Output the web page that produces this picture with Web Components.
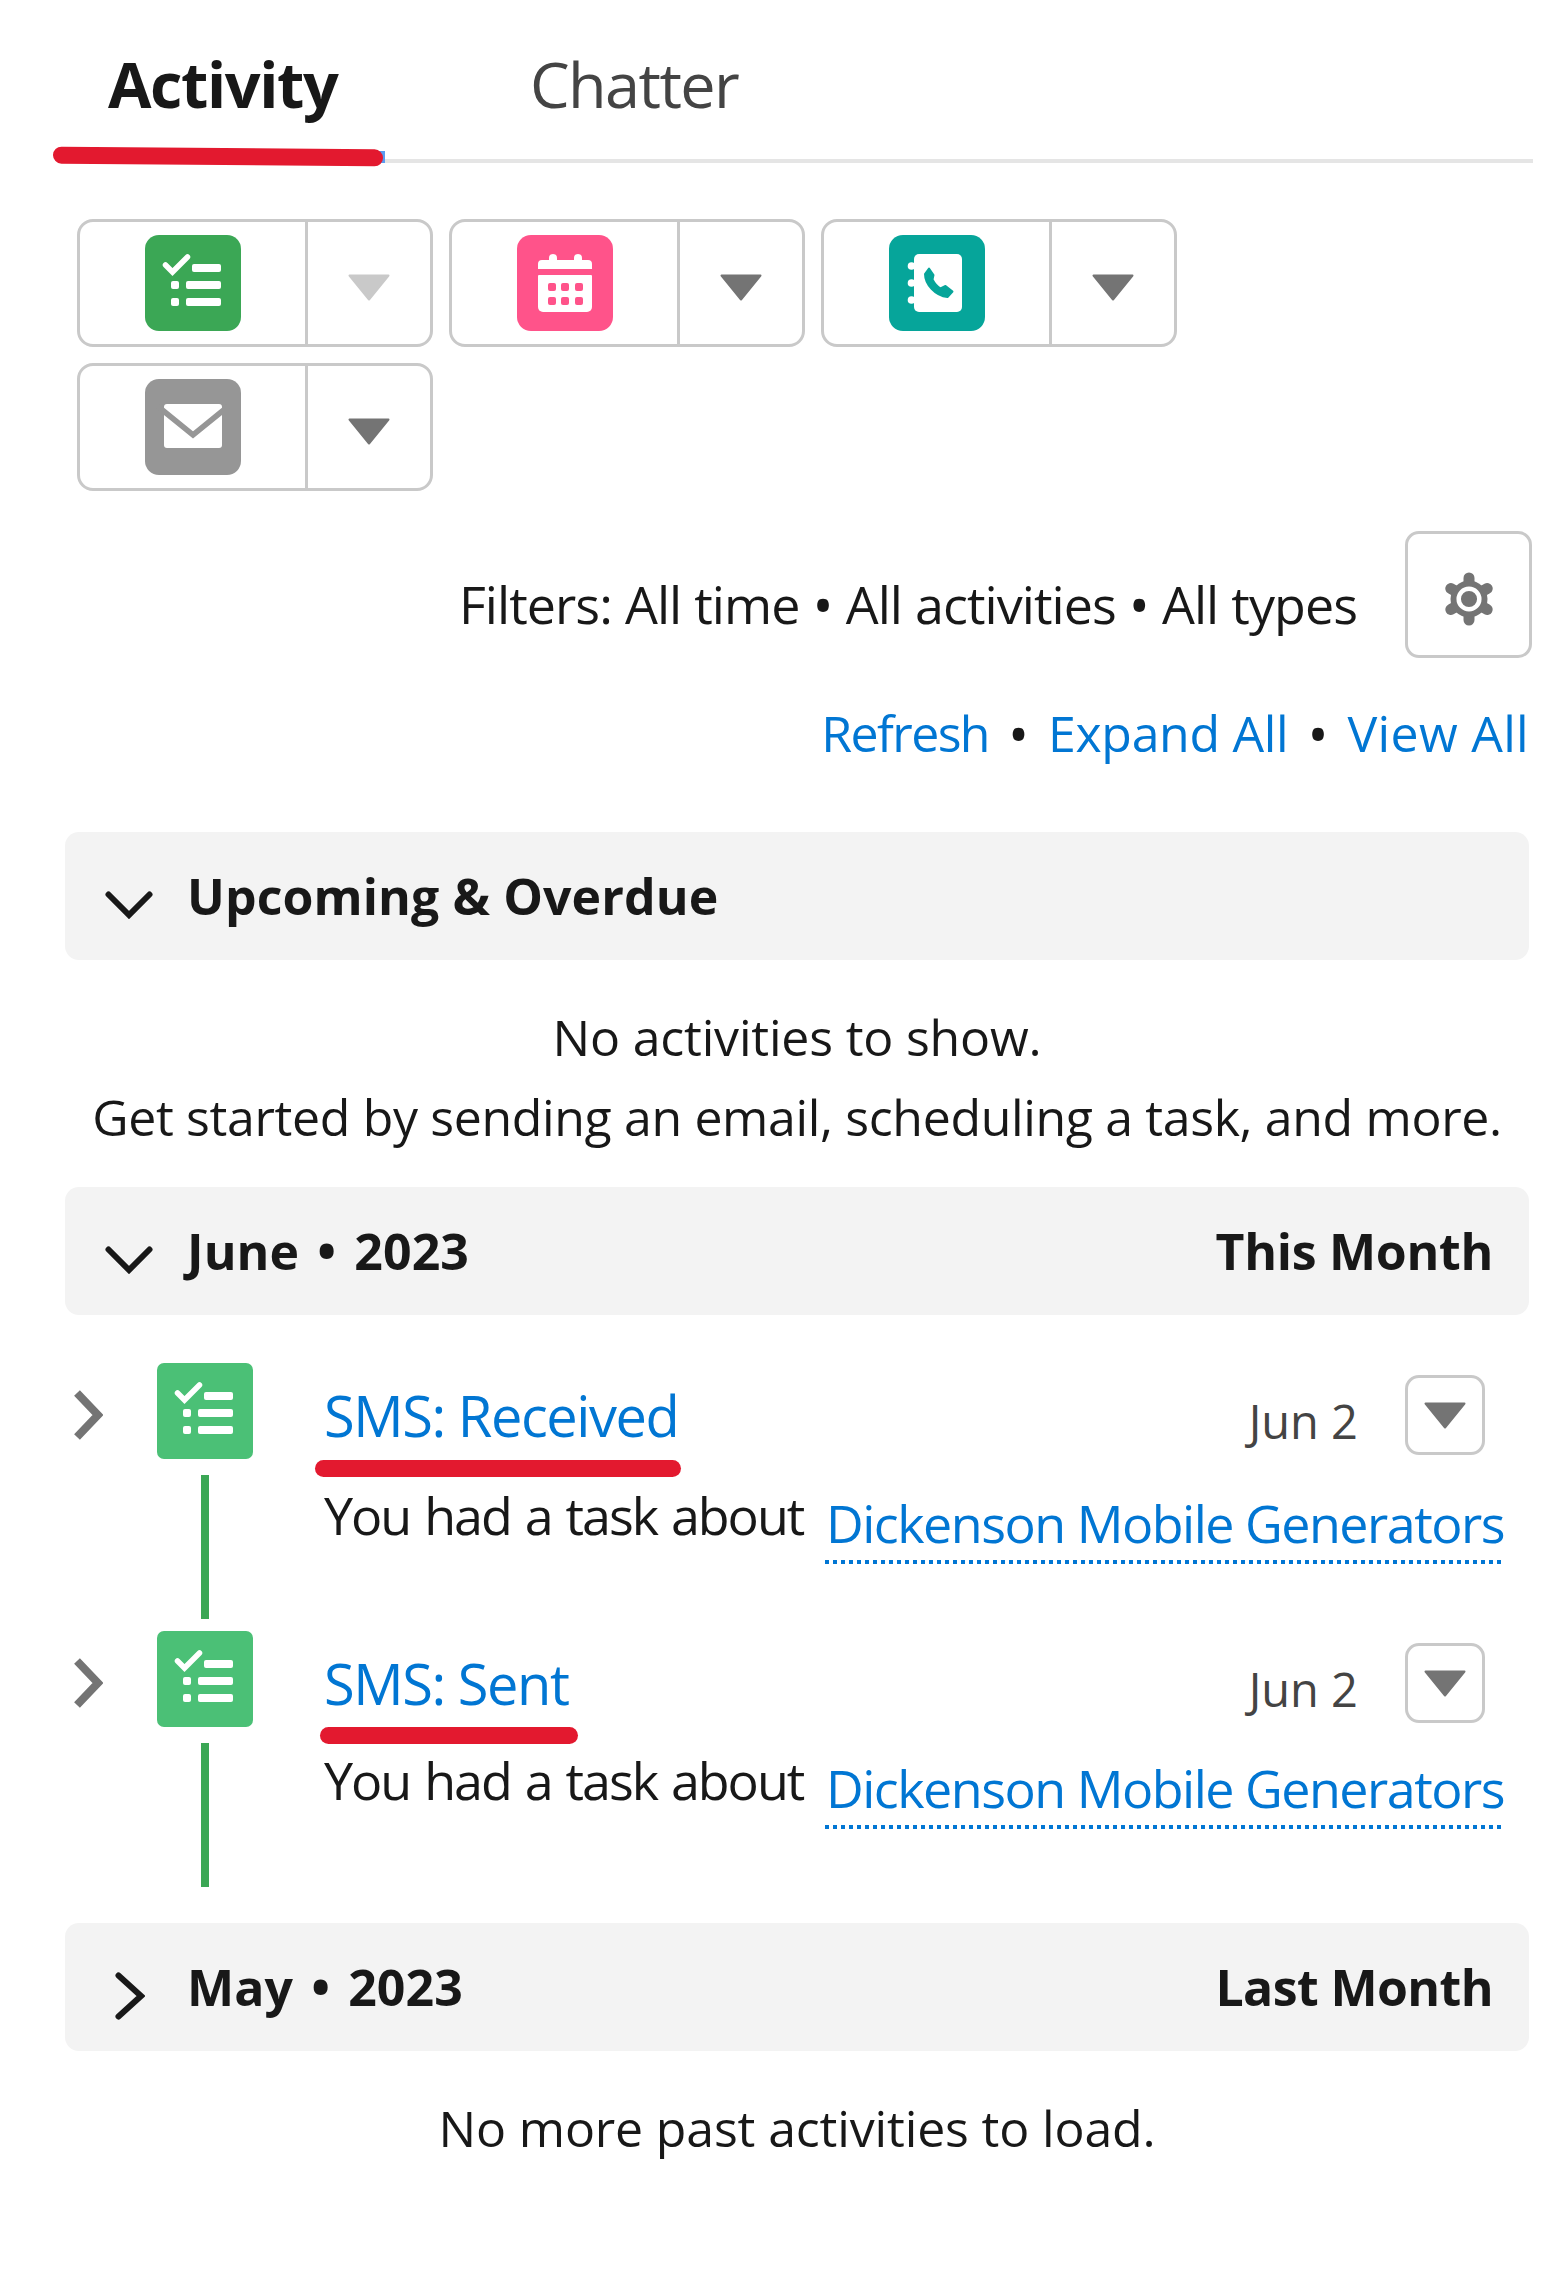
<!DOCTYPE html>
<html>
<head>
<meta charset="utf-8">
<style>
    html, body { margin: 0; background: #fff; }
    body { font-family: "Open Sans", "Noto Sans", sans-serif; color: #181818; }
</style>
</head>
<body>
<activity-panel></activity-panel>

<script>
const TASK = `<rect width="96" height="96" rx="RX" fill="BG"/>
    <path d="M20.500 30l7 7 15-15" fill="none" stroke="#fff" stroke-width="5.500" stroke-linecap="round"/>
    <rect x="47" y="29" width="29" height="8" rx="2" fill="#fff"/>
    <rect x="41" y="46" width="35" height="8" rx="2" fill="#fff"/>
    <rect x="41" y="63" width="35" height="8" rx="2" fill="#fff"/>
    <rect x="26" y="46" width="8" height="8" rx="2" fill="#fff"/>
    <rect x="26" y="63" width="8" height="8" rx="2" fill="#fff"/>`;

const ICONS = {
    task: `<svg viewBox="0 0 96 96" width="96" height="96">${TASK.replace('RX', '14').replace('BG', '#3ba755')}</svg>`,
    taskLight: `<svg viewBox="0 0 96 96" width="96" height="96">${TASK.replace('RX', '7').replace('BG', '#4bc076')}</svg>`,
    event: `<svg viewBox="0 0 96 96" width="96" height="96"><rect width="96" height="96" rx="14" fill="#ff538a"/>
        <path d="M32 25v-2a4 4 0 0 1 8 0v2h17v-2a4 4 0 0 1 8 0v2h6a4 4 0 0 1 4 4v5H21v-5a4 4 0 0 1 4-4z" fill="#fff"/>
        <path d="M22 40h52a1 1 0 0 1 1 1v31a5 5 0 0 1-5 5H26a5 5 0 0 1-5-5V41a1 1 0 0 1 1-1z" fill="#fff"/>
        <g fill="#ff538a"><rect x="31" y="48" width="8" height="8" rx="2"/><rect x="44" y="48" width="8" height="8" rx="2"/><rect x="58" y="48" width="8" height="8" rx="2"/>
        <rect x="31" y="62" width="8" height="8" rx="2"/><rect x="44" y="62" width="8" height="8" rx="2"/><rect x="58" y="62" width="8" height="8" rx="2"/></g></svg>`,
    call: `<svg viewBox="0 0 96 96" width="96" height="96"><rect width="96" height="96" rx="14" fill="#06a59a"/>
        <rect x="25" y="19" width="48" height="58" rx="5" fill="#fff"/>
        <g fill="#fff"><circle cx="22.500" cy="31" r="3.800"/><circle cx="22.500" cy="48" r="3.800"/><circle cx="22.500" cy="65" r="3.800"/></g>
        <path d="M40 33.500l4.500 6.500-1 4.500q3 6 8 9l5-2.500 7 5.500-5 5.500C46 61 36 49 36 39z" fill="#06a59a" stroke="#06a59a" stroke-width="2" stroke-linejoin="round"/></svg>`,
    email: `<svg viewBox="0 0 96 96" width="96" height="96"><rect width="96" height="96" rx="14" fill="#969696"/>
        <rect x="19" y="25" width="58" height="44" rx="3" fill="#fff"/>
        <path d="M13 27.500L48 56l35-28.500" fill="none" stroke="#969696" stroke-width="5.500"/></svg>`
};

const TRIANGLE = (color) => `<svg viewBox="0 0 42 27" width="42" height="27"><path d="M1.500 1.500h39L21 25.500z" fill="${color}" stroke="${color}" stroke-width="2" stroke-linejoin="round"/></svg>`;

class RedMark extends HTMLElement {
    constructor() {
        super();
        this.attachShadow({mode: "open"}).innerHTML = `
        <style>
            :host {
                display: block;
                position: absolute;
                background: #e3192f;
                border-radius: 9px;
                height: 17px;
            }
        </style>`;
    }
}

class TabBar extends HTMLElement {
    constructor() {
        super();
        this.attachShadow({mode: "open"}).innerHTML = `
        <style>
            :host {
                display: flex;
                position: relative;
                height: 163px;
                box-sizing: border-box;
                border-bottom: 4px solid #e5e5e5;
                margin-right: -4px;
            }
            .tab {
                font-size: 63px;
                line-height: 86px;
                padding-top: 41px;
                letter-spacing: -1.400px;
            }
            .on {
                width: 277px;
                padding-left: 43px;
                font-weight: 700;
            }
            .off { margin-left: 145px; color: #444; letter-spacing: -1.600px; }
            .blue {
                position: absolute;
                left: 314px;
                top: 151px;
                width: 6px;
                height: 12px;
                background: #5a9bf0;
            }
            red-mark {
                left: -12px;
                top: 148px;
                width: 330px;
                transform: rotate(0.5deg);
            }
        </style>
        <div class="tab on">Activity</div>
        <div class="tab off">Chatter</div>
        <div class="blue"></div>
        <red-mark></red-mark>`;
    }
}

class SplitButton extends HTMLElement {
    constructor() {
        super();
        const disabled = this.hasAttribute('disabled');
        this.attachShadow({mode: "open"}).innerHTML = `
        <style>
            :host {
                display: flex;
                width: 356px;
                height: 128px;
                box-sizing: border-box;
                border: 3px solid #c9c9c9;
                border-radius: 16px;
            }
            .main {
                width: 225px;
                display: flex;
                align-items: center;
                justify-content: center;
                border-right: 3px solid #c9c9c9;
            }
            .more {
                flex: 1;
                display: flex;
                align-items: center;
                justify-content: center;
                padding-top: 8px;
                box-sizing: border-box;
            }
            svg { display: block; }
        </style>
        <div class="main">${ICONS[this.getAttribute('icon')]}</div>
        <div class="more">${TRIANGLE(disabled ? '#c9c9c9' : '#747474')}</div>`;
    }
}

class FilterBar extends HTMLElement {
    constructor() {
        super();
        this.attachShadow({mode: "open"}).innerHTML = `
        <style>
            :host {
                display: block;
                margin-top: 40px;
                margin-right: -3px;
            }
            .filters {
                display: flex;
                justify-content: flex-end;
                gap: 48px;
            }
            .label { font-size: 52px; line-height: 70px; padding-top: 38px; letter-spacing: -0.950px; word-spacing: 0.500px; white-space: nowrap; }
            .label span { font-size: 56px; line-height: 1px; position: relative; top: 2px; }
            .gear {
                width: 127px;
                height: 127px;
                box-sizing: border-box;
                border: 3px solid #c9c9c9;
                border-radius: 14px;
                display: flex;
                align-items: center;
                justify-content: center;
            }
            .gear svg { margin-top: 8px; }
            .links {
                display: flex;
                justify-content: flex-end;
                align-items: center;
                font-size: 50px;
                line-height: 70px;
                color: #0176d3;
                padding-right: 3px;
                margin-top: 40px;
                margin-bottom: 64px;
                gap: 19px;
            }
            .dot { color: #181818; font-size: 56px; }
            .a { letter-spacing: -1.600px; }
            .b { letter-spacing: -0.300px; }
            .c { letter-spacing: 0.300px; }
        </style>
        <div class="filters">
            <div class="label">Filters: All time <span>•</span> All activities <span>•</span> All types</div>
            <div class="gear">
                <svg viewBox="0 0 60 60" width="60" height="60">
                    <g stroke="#747474" stroke-width="11" stroke-linecap="round">
                        <path d="M30 9v42M11.800 19.500l36.400 21M11.800 40.500l36.400-21"/>
                    </g>
                    <circle cx="30" cy="30" r="18.500" fill="#747474"/>
                    <circle cx="30" cy="30" r="10.300" fill="#747474" stroke="#fff" stroke-width="4.500"/>
                </svg>
            </div>
        </div>
        <div class="links">
            <span class="a">Refresh</span><span class="dot">•</span><span class="b">Expand All</span><span class="dot">•</span><span class="c">View All</span>
        </div>`;
    }
}

class SectionHeader extends HTMLElement {
    constructor() {
        super();
        const open = this.hasAttribute('open');
        const chevron = open
            ? `<svg viewBox="0 0 48 28" width="48" height="28" class="open"><path d="M3.500 3.500L24 24 44.500 3.500" fill="none" stroke="#181818" stroke-width="6" stroke-linecap="round"/></svg>`
            : `<svg viewBox="0 0 30 48" width="30" height="48" class="closed"><path d="M3.500 3.500L26 24 3.500 44.500" fill="none" stroke="#181818" stroke-width="6" stroke-linecap="round"/></svg>`;
        this.attachShadow({mode: "open"}).innerHTML = `
        <style>
            :host {
                display: flex;
                align-items: center;
                height: 128px;
                background: #f3f3f3;
                border-radius: 14px;
                font-size: 50px;
                font-weight: 700;
                padding-right: 36px;
            }
            svg { display: block; flex: none; }
            .open { margin: 17px 34px 0 40px; }
            .closed { margin: 17px 42px 0 50px; }
            .title { flex: 1; letter-spacing: 0.100px; }
        </style>
        ${chevron}
        <div class="title"><slot></slot></div>
        <div><slot name="when"></slot></div>`;
    }
}

class EmptyNote extends HTMLElement {
    constructor() {
        super();
        this.attachShadow({mode: "open"}).innerHTML = `
        <style>
            :host {
                display: block;
                text-align: center;
                font-size: 50px;
                line-height: 80px;
                letter-spacing: -0.350px;
            }
        </style>
        <slot></slot>`;
    }
}

class TimelineItem extends HTMLElement {
    constructor() {
        super();
        const markWidth = this.getAttribute('mark-width');
        const markLeft = this.getAttribute('mark-left');
        this.attachShadow({mode: "open"}).innerHTML = `
        <style>
            :host {
                display: flex;
                position: relative;
                height: 256px;
                margin-bottom: 12px;
            }
            .toggle { width: 92px; flex: none; }
            .toggle svg { display: block; margin: 27px 0 0 8px; }
            .rail { width: 96px; flex: none; }
            .rail svg { display: block; }
            .line { width: 8px; height: 144px; margin: 16px 0 0 44px; background: #3ba755; }
            .body { flex: 1; min-width: 0; padding: 12px 44px 0 71px; box-sizing: border-box; }
            .head { display: flex; height: 80px; }
            .title { flex: 1; font-size: 56px; line-height: 80px; color: #0176d3; letter-spacing: -1.450px; }
            .date { font-size: 47px; line-height: 80px; padding-top: 6px; color: #444; margin-right: 47px; }
            .menu {
                width: 80px;
                height: 80px;
                box-sizing: border-box;
                border: 3px solid #c9c9c9;
                border-radius: 14px;
                display: flex;
                align-items: center;
                justify-content: center;
            }
            .sub { display: flex; margin-top: var(--sub-top, 20px); }
            .text { width: 501px; flex: none; font-size: 52px; line-height: 80px; white-space: nowrap; letter-spacing: -2px; word-spacing: 2.400px; }
            .link {
                font-size: 52px;
                line-height: 66px;
                color: #0176d3;
                white-space: nowrap;
                letter-spacing: -1.500px;
                margin-top: var(--link-top, 15px);
                padding: 0 1px 8px;
                background: repeating-linear-gradient(to right, #0176d3 0 4px, transparent 4px 8px) bottom / 100% 4px no-repeat;
            }
            red-mark { left: ${markLeft}px; top: var(--mark-top, 97px); width: ${markWidth}px; }
        </style>
        <div class="toggle">
            <svg viewBox="0 0 30 50" width="30" height="50"><path d="M4 3l21 22L4 47" fill="none" stroke="#747474" stroke-width="8"/></svg>
        </div>
        <div class="rail">
            ${ICONS.taskLight}
            <div class="line"></div>
        </div>
        <div class="body">
            <div class="head">
                <div class="title"><slot name="title"></slot></div>
                <div class="date"><slot name="date"></slot></div>
                <div class="menu">${TRIANGLE('#747474')}</div>
            </div>
            <div class="sub">
                <div class="text"><slot name="text"></slot></div>
                <div class="link"><slot name="link"></slot></div>
            </div>
        </div>
        <red-mark></red-mark>`;
    }
}

class ActivityPanel extends HTMLElement {
    constructor() {
        super();
        this.attachShadow({mode: "open"}).innerHTML = `
        <style>
            :host {
                display: block;
                height: 2288px;
                box-sizing: border-box;
                padding: 0 29px 0 65px;
            }
            .actions {
                display: flex;
                flex-wrap: wrap;
                gap: 16px;
                margin: 56px 0 0 12px;
                width: 1100px;
            }
            .note1 { margin: 37px 0 30px; }
            .list { margin-top: 48px; }
            .more { margin-top: 37px; letter-spacing: -0.150px; }
            .last { margin-top: 36px; }
            .sub2 { --sub-top: 17px; --link-top: 15px; --mark-top: 96px; }
            .d1 { word-spacing: 5px; }
            .d2 { letter-spacing: -0.300px; }
            .d3 { letter-spacing: -0.600px; }
            .s1 { letter-spacing: -0.200px; }
        </style>
        <tab-bar></tab-bar>
        <div class="actions">
            <split-button icon="task" disabled></split-button>
            <split-button icon="event"></split-button>
            <split-button icon="call"></split-button>
            <split-button icon="email"></split-button>
        </div>
        <filter-bar></filter-bar>
        <section-header open>Upcoming &amp; Overdue</section-header>
        <empty-note class="note1"><span class="s1">No activities to show.</span><br>Get started by sending an email, scheduling a task, and more.</empty-note>
        <section-header open><span class="d1">June • 2023</span><span slot="when" class="d2">This Month</span></section-header>
        <div class="list">
            <timeline-item mark-left="250" mark-width="366">
                <span slot="title">SMS: Received</span>
                <span slot="date">Jun 2</span>
                <span slot="text">You had a task about</span>
                <span slot="link">Dickenson Mobile Generators</span>
            </timeline-item>
            <timeline-item class="sub2" mark-left="255" mark-width="258">
                <span slot="title">SMS: Sent</span>
                <span slot="date">Jun 2</span>
                <span slot="text">You had a task about</span>
                <span slot="link">Dickenson Mobile Generators</span>
            </timeline-item>
        </div>
        <section-header class="last"><span class="d1">May • 2023</span><span slot="when" class="d3">Last Month</span></section-header>
        <empty-note class="more">No more past activities to load.</empty-note>`;
    }
}

customElements.define("red-mark", RedMark);
customElements.define("tab-bar", TabBar);
customElements.define("split-button", SplitButton);
customElements.define("filter-bar", FilterBar);
customElements.define("section-header", SectionHeader);
customElements.define("empty-note", EmptyNote);
customElements.define("timeline-item", TimelineItem);
customElements.define("activity-panel", ActivityPanel);
</script>
</body>
</html>
